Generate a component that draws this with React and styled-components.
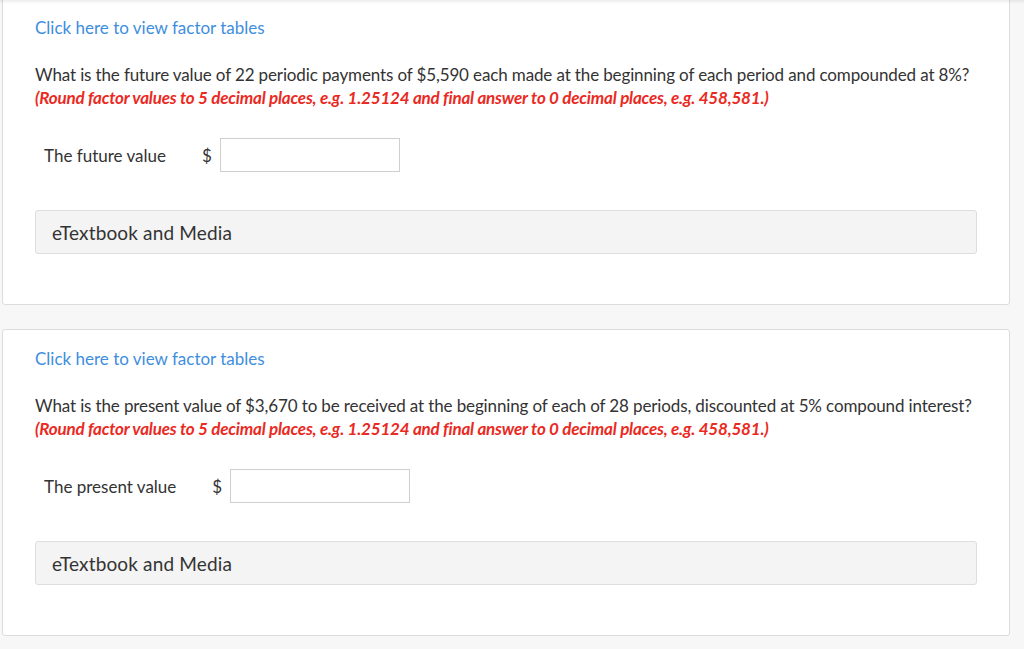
import React from 'react'
import styled, { createGlobalStyle } from 'styled-components'

const GlobalStyle = createGlobalStyle`
  html, body {
    margin: 0;
    padding: 0;
    background: #f7f7f7;
    font-family: Lato, "Open Sans", sans-serif;
    color: #333;
  }
`;

const questions = [
  {
    text: 'What is the future value of 22 periodic payments of $5,590 each made at the beginning of each period and compounded at 8%?',
    label: 'The future value',
  },
  {
    text: 'What is the present value of $3,670 to be received at the beginning of each of 28 periods, discounted at 5% compound interest?',
    label: 'The present value',
  },
];

function App() {
  return (
    <>
      <GlobalStyle />
      <TopShade />
      <Page>
        {questions.map((q, i) => (
          <Card key={i}>
            <FactorLink href="#">Click here to view factor tables</FactorLink>
            <Question>
              {q.text}
              <Hint>(Round factor values to 5 decimal places, e.g. 1.25124 and final answer to 0 decimal places, e.g. 458,581.)</Hint>
            </Question>
            <AnswerRow>
              <Label>{q.label}</Label>
              <Dollar>$</Dollar>
              <AnswerInput type="text" />
            </AnswerRow>
            <MediaBar>eTextbook and Media</MediaBar>
          </Card>
        ))}
      </Page>
    </>
  )
}

const TopShade = styled.div`
    position: fixed;
    top: 0;
    left: 0;
    right: 0;
    height: 4px;
    background: linear-gradient(to bottom, rgba(0,0,0,0.07), rgba(0,0,0,0));
    pointer-events: none;
`;
const Page = styled.div`
    display: flex;
    flex-direction: column;
    gap: 24px;
    margin-top: -2px;
    padding: 0 14px 20px 2px;
`;
const Card = styled.div`
    background: #fff;
    border: 1px solid #dcdcdc;
    border-radius: 3px;
    padding: 18px 32px 50px 32px;
    display: flex;
    flex-direction: column;
`;
const FactorLink = styled.a`
    font-size: 17px;
    line-height: 22px;
    color: #3e8ede;
    text-decoration: none;
    align-self: flex-start;
`;
const Question = styled.div`
    margin-top: 24px;
    font-size: 17px;
    line-height: 23px;
    letter-spacing: -0.13px;
    color: #333;
`;
const Hint = styled.div`
    color: #ea2a1f;
    font-weight: 700;
    font-style: italic;
    letter-spacing: -0.2px;
`;
const AnswerRow = styled.div`
    display: flex;
    align-items: center;
    margin-top: 29px;
    padding-left: 9px;
`;
const Label = styled.span`
    font-size: 17px;
    color: #333;
    margin-right: 36px;
`;
const Dollar = styled.span`
    font-size: 17px;
    color: #333;
    margin-right: 8px;
`;
const AnswerInput = styled.input`
    width: 180px;
    height: 34px;
    box-sizing: border-box;
    border: 1px solid #cfcfcf;
    border-radius: 0;
    background: #fff;
    font-family: inherit;
    font-size: 16px;
    padding: 0 8px;
    outline: none;
`;
const MediaBar = styled.div`
    margin-top: 38px;
    height: 44px;
    box-sizing: border-box;
    display: flex;
    align-items: center;
    padding-left: 16px;
    background: #f4f4f4;
    border: 1px solid #dedede;
    border-radius: 3px;
    font-size: 19px;
    letter-spacing: 0.15px;
    color: #333;
`;

export default App
